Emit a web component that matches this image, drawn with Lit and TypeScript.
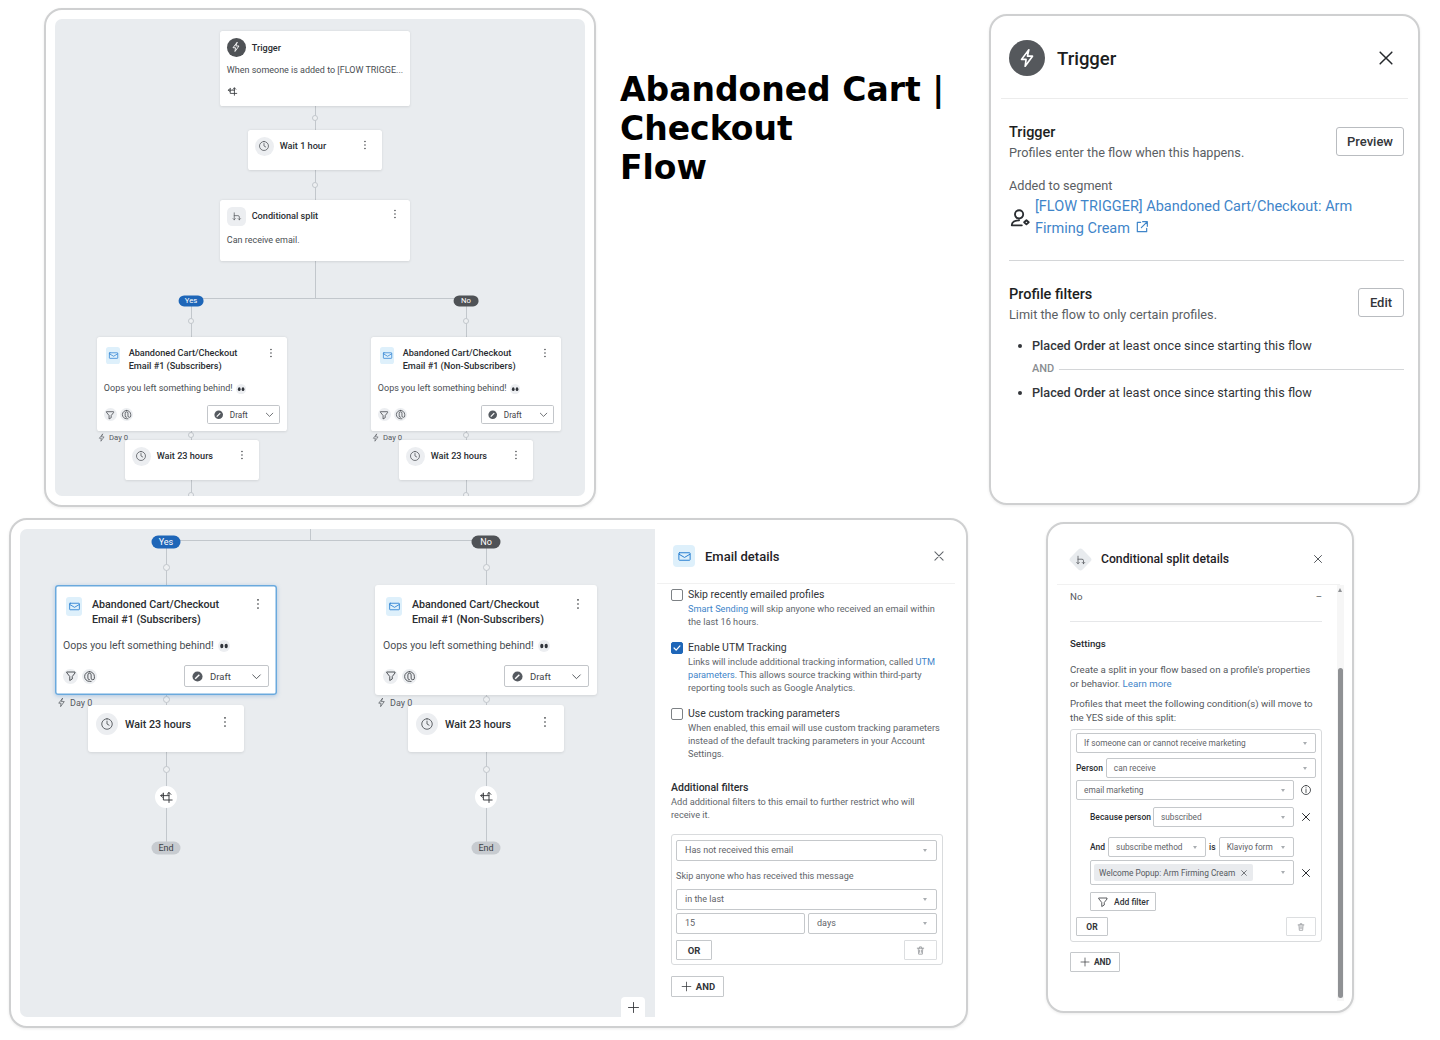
import { LitElement, html, css, nothing } from "lit";
import { customElement } from "lit/decorators.js";

const PATHS: Record<string, string> = {
  close: "M5 5l14 14M19 5L5 19",
  clock: "M12 3a9 9 0 1 0 0 18a9 9 0 1 0 0-18zM12 7v5l3.5 2",
  mail: "M4 6h16a1 1 0 0 1 1 1v10a1 1 0 0 1-1 1H4a1 1 0 0 1-1-1V7a1 1 0 0 1 1-1zM3.5 8.5l8.5 5 8.5-5",
  bolt: "M14 3L6 13.5h5L10 21l8-11h-5.5z",
  split: "M7 4v15M7 10h8a3 3 0 0 1 3 3v6M4.5 16.5L7 19l2.5-2.5M15.5 16.5L18 19l2.5-2.5",
  funnel: "M4 4h16v2l-5.5 7v5l-5 3v-8L4 6z",
  at: "M12 3a9 9 0 0 0 0 18h3M12 3a9 9 0 0 1 9 9v3a3 3 0 0 1-6 0V9a3 3 0 0 0-6 0v6a3 3 0 0 0 3 3",
  branch: "M16 20V4M13 7l3-3 3 3M3 9h13M6 6L3 9l3 3M7 5v11h14",
  trash: "M5 7h14M10 7V4h4v3M7 7l1 13h8l1-13M10 11v5M14 11v5",
  plus: "M12 4v16M4 12h16",
  info: "M12 3a9 9 0 1 0 0 18a9 9 0 1 0 0-18zM12 11v6M12 7.5v.5",
  ext: "M10 5H5v14h14v-5M13 4h7v7M20 4l-9 9",
  user: "M11 3.5a4.5 4.5 0 1 0 0 9a4.5 4.5 0 1 0 0-9zM3 20c0-3.5 3.5-5.5 8-5.5M3 20h11M19 14.5l2.5 2.2-2.5 2.2-2.5-2.2z",
  chev: "M5 9l7 7 7-7",
  check: "M5 12l5 5 9-10",
  kebab: "M12 5v.01M12 12v.01M12 19v.01",
};

const icon = (name: string, size: number, sw = 1.6) => html`<svg
  class="ic"
  width=${size}
  height=${size}
  viewBox="0 0 24 24"
  fill="none"
  stroke="currentColor"
  stroke-width=${sw}
  stroke-linecap="round"
  stroke-linejoin="round"
><path d=${PATHS[name]}></path></svg>`;

const eyes = html`<svg class="ic" width="12" height="12" viewBox="0 0 12 12">
  <circle cx="6" cy="6" r="6" fill="#eceef1"></circle>
  <ellipse cx="3.8" cy="6" rx="1.6" ry="2.2" fill="#30343a"></ellipse>
  <ellipse cx="8.2" cy="6" rx="1.6" ry="2.2" fill="#30343a"></ellipse>
</svg>`;

const draftDot = html`<svg class="ic" width="11" height="11" viewBox="0 0 12 12">
  <circle cx="6" cy="6" r="5.5" fill="#555a60"></circle>
  <path d="M3.5 8.5L8 4" stroke="#fff" stroke-width="1.6"></path>
</svg>`;

type Pt = [number, number];
type Diagram = {
  zoom: number;
  lines: [number, number, number, number][];
  dots: Pt[];
  pills: [number, number, string, string][];
  nodes: unknown[];
};

@customElement("app-root")
export class AppRoot extends LitElement {
  static styles = css`
    :host {
      display: block;
      position: relative;
      width: 1440px;
      height: 1040px;
      background: #fff;
      overflow: hidden;
      font-family: Roboto, "Noto Sans", sans-serif;
      color: #25282c;
    }
    .ic {
      display: block;
      flex: none;
    }
    .win {
      position: absolute;
      box-sizing: border-box;
      background: #fff;
      border: 2px solid #cfd0d1;
      border-radius: 18px;
      box-shadow: 0 1px 3px rgba(0, 0, 0, 0.08);
    }
    .win1 {
      left: 44px;
      top: 8px;
      width: 552px;
      height: 499px;
      padding: 9px;
      display: flex;
    }
    .win3 {
      left: 9px;
      top: 518px;
      width: 959px;
      height: 510px;
      padding: 9px;
      display: flex;
    }
    .canvas {
      position: relative;
      flex: 1;
      background: #e9ecef;
      border-radius: 7px;
      overflow: hidden;
    }
    .win3 .canvas {
      flex: none;
      width: 635px;
      border-radius: 7px 0 0 7px;
    }
    .stage {
      position: absolute;
      inset: 0;
    }
    .line {
      position: absolute;
      background: #c2c7cc;
    }
    .dot {
      position: absolute;
      width: 7px;
      height: 7px;
      box-sizing: border-box;
      margin: -3.5px 0 0 -3.5px;
      border-radius: 50%;
      background: #eef0f2;
      border: 1px solid #c2c7cc;
    }
    .pill {
      position: absolute;
      transform: translate(-50%, -50%);
      width: 29px;
      height: 13px;
      border-radius: 7px;
      font-size: 9px;
      line-height: 13px;
      text-align: center;
      color: #fff;
    }
    .yes {
      background: #1e66b8;
    }
    .no {
      background: #4f5256;
    }
    .end {
      background: #c7cbd0;
      color: #3c4045;
    }
    .node {
      position: absolute;
      box-sizing: border-box;
      display: flex;
      flex-direction: column;
      background: #fff;
      border-radius: 3px;
      box-shadow: 0 1px 3px rgba(0, 0, 0, 0.1);
      padding: 8px;
      width: 222px;
      font-size: 10.5px;
      color: #4a4e53;
    }
    .node.selected {
      box-shadow: inset 0 0 0 1.5px #6aa9dd, 0 1px 4px rgba(60, 130, 200, 0.35);
    }
    .head {
      display: flex;
      align-items: flex-start;
    }
    .nt {
      flex: 1;
      font-weight: 500;
      font-size: 10.7px;
      line-height: 15px;
      color: #2a2d31;
    }
    .kebab {
      margin-top: -1px;
      color: #2a2d31;
    }
    .email {
      height: 110px;
    }
    .email .head {
      padding: 4px 0 0 3px;
    }
    .email .nt {
      margin: 0 0 0 10px;
    }
    .email .kebab {
      margin: 0 4px 0 0;
    }
    .subject {
      display: flex;
      align-items: center;
      gap: 4px;
      margin-top: 11px;
      line-height: 15px;
    }
    .foot {
      display: flex;
      align-items: center;
      gap: 4px;
      margin-top: auto;
      color: #3f4348;
    }
    .draft {
      margin-left: auto;
      box-sizing: border-box;
      width: 85px;
      height: 22px;
      display: flex;
      align-items: center;
      gap: 7px;
      padding: 0 5px 0 7px;
      border: 1px solid #c3c6ca;
      border-radius: 2px;
      font-size: 9.5px;
      background: #fff;
    }
    .draft svg:last-child {
      margin-left: auto;
    }
    .tile {
      display: flex;
      align-items: center;
      justify-content: center;
      flex: none;
      width: 16px;
      height: 19px;
      border-radius: 3px;
      background: #def0fb;
      color: #2a80d2;
    }
    .wait {
      width: 156px;
      height: 47px;
    }
    .wait .nt {
      margin: 4px 0 0 7px;
    }
    .wait .kebab {
      margin: 2px 4px 0 0;
    }
    .round {
      display: flex;
      align-items: center;
      justify-content: center;
      flex: none;
      width: 22px;
      height: 22px;
      border-radius: 50%;
      background: #eceef1;
      color: #55595e;
    }
    .foot .round {
      width: 15px;
      height: 15px;
      color: #3f4348;
    }
    .trigger {
      height: 88px;
    }
    .cond {
      height: 71px;
    }
    .trigger .nt,
    .cond .nt {
      margin: 5px 0 0 7px;
    }
    .cond .nt {
      margin-top: 4px;
    }
    .cond .kebab {
      margin: 1px 3px 0 0;
    }
    .dark {
      background: #4f5256;
      color: #fff;
    }
    .line-text {
      margin-top: 8px;
      white-space: nowrap;
      line-height: 15px;
    }
    .cond .line-text {
      margin-top: 10px;
    }
    .mini-ic {
      margin-top: 11px;
      color: #33363a;
    }
    .day {
      position: absolute;
      display: flex;
      align-items: center;
      gap: 3px;
      font-size: 9px;
      color: #55595e;
    }
    .circle {
      position: absolute;
      display: flex;
      align-items: center;
      justify-content: center;
      transform: translate(-50%, -50%);
      width: 22px;
      height: 22px;
      border-radius: 50%;
      background: #fff;
      color: #33363a;
    }
    .zoom-btn {
      position: absolute;
      right: 10px;
      bottom: 0;
      width: 24px;
      height: 20px;
      display: flex;
      align-items: center;
      justify-content: center;
      background: #fff;
      border-radius: 4px 4px 0 0;
      color: #33363a;
    }
    .page-title {
      position: absolute;
      left: 620px;
      top: 70px;
      margin: 0;
      font-family: "DejaVu Sans", sans-serif;
      font-weight: 700;
      font-size: 33px;
      line-height: 39px;
      color: #000;
    }

    /* trigger panel */
    .win2 {
      left: 989px;
      top: 14px;
      width: 431px;
      height: 491px;
      padding: 24px 10px 0;
    }
    .w2-head {
      display: flex;
      align-items: center;
      padding: 0 12px 22px 8px;
      border-bottom: 1px solid #ececec;
    }
    .big-round {
      display: flex;
      align-items: center;
      justify-content: center;
      width: 36px;
      height: 36px;
      border-radius: 50%;
      background: #55585c;
      color: #fff;
    }
    .w2-title {
      flex: 1;
      margin: 2px 0 0 12px;
      font-size: 18.5px;
      font-weight: 500;
      color: #1c1e21;
    }
    .w2-body {
      padding: 0 4px 0 8px;
    }
    .sec {
      font-size: 12.7px;
      line-height: 20px;
      color: #5a5e63;
    }
    .sec-head {
      display: flex;
      justify-content: space-between;
      align-items: flex-start;
    }
    .sec-name {
      font-size: 14.5px;
      font-weight: 500;
      color: #1c1e21;
    }
    .btn {
      box-sizing: border-box;
      display: flex;
      align-items: center;
      justify-content: center;
      gap: 3px;
      border: 1px solid #b9bcc0;
      border-radius: 3px;
      background: #fff;
      font-weight: 700;
      color: #33363a;
    }
    .btn-lg {
      height: 29px;
      font-size: 13px;
      font-weight: 500;
      margin-top: 4px;
    }
    .first {
      margin-top: 24px;
      padding-bottom: 20px;
      border-bottom: 1px solid #d4d6d8;
    }
    .added {
      margin-top: 13px;
    }
    .seg {
      display: flex;
      align-items: center;
      gap: 4px;
      font-size: 14.5px;
      line-height: 22px;
      white-space: nowrap;
    }
    .seg > .ic {
      color: #2a2d31;
    }
    a {
      color: #3f85c9;
      text-decoration: none;
    }
    .seg .ext {
      display: inline-block;
      vertical-align: -2px;
    }
    .second {
      margin-top: 24px;
    }
    .filter {
      display: flex;
      align-items: center;
      margin-top: 11px;
      padding-left: 9px;
      color: #33363a;
    }
    .filter::before {
      content: "";
      width: 4px;
      height: 4px;
      margin-right: 10px;
      border-radius: 50%;
      background: #33363a;
    }
    .filter b {
      font-weight: 500;
    }
    .and-row {
      display: flex;
      align-items: center;
      gap: 5px;
      margin: 3px 0 -7px 23px;
      font-size: 11px;
      font-weight: 500;
      color: #8a8d91;
    }
    .and-row::after {
      content: "";
      flex: 1;
      height: 1px;
      background: #d4d6d8;
    }

    /* email details panel */
    .panel {
      flex: 1;
      min-width: 0;
      display: flex;
      flex-direction: column;
      font-size: 9.2px;
      line-height: 13px;
      color: #62666b;
    }
    .panel-head {
      flex: none;
      display: flex;
      align-items: center;
      height: 55px;
      padding: 0 9px 0 18px;
      margin: 0 2px;
      box-sizing: border-box;
      border-bottom: 1px solid #f1f1f1;
    }
    .panel-name {
      flex: 1;
      margin-left: 10px;
      font-size: 13px;
      font-weight: 500;
      color: #1f2226;
    }
    .panel-head .tile {
      width: 22px;
      height: 22px;
      margin-left: -2px;
      border-radius: 4px;
    }
    .panel-body {
      padding: 4px 14px 0 16px;
    }
    .opt {
      display: flex;
      gap: 5px;
      margin-bottom: 13px;
      white-space: nowrap;
    }
    .box {
      box-sizing: border-box;
      flex: none;
      width: 12px;
      height: 12px;
      margin-top: 1px;
      border: 1px solid #7d8185;
      border-radius: 2px;
      background: #fff;
    }
    .box.on {
      display: flex;
      align-items: center;
      justify-content: center;
      border-color: #1e66b8;
      background: #1e66b8;
      color: #fff;
    }
    .opt-t {
      font-size: 10.5px;
      line-height: 14px;
      color: #33363a;
    }
    .sub-t {
      font-size: 10.5px;
      line-height: 14px;
      font-weight: 500;
      color: #2a2d31;
    }
    .adds {
      margin-top: 21px;
    }
    .group {
      box-sizing: border-box;
      margin-top: 13px;
      width: 272px;
      height: 131px;
      padding: 5px 5px 5px 4px;
      border: 1px solid #d9dbdd;
      border-radius: 3px;
    }
    .sel {
      box-sizing: border-box;
      display: flex;
      align-items: center;
      height: 21px;
      padding: 0 9px 0 8px;
      border: 1px solid #c5c8cb;
      border-radius: 2px;
      background: #fff;
      font-size: 9px;
      color: #5f6368;
      white-space: nowrap;
    }
    .sel.caret::after {
      content: "";
      margin-left: auto;
      border: 2.5px solid transparent;
      border-top: 3px solid #a9adb1;
      border-bottom: 0;
    }
    .group .note {
      margin: 9px 0 6px;
      font-size: 9.1px;
    }
    .two {
      display: flex;
      gap: 3px;
      margin-top: 3px;
    }
    .two .sel {
      flex: 1;
    }
    .acts {
      display: flex;
      justify-content: space-between;
      margin-top: 6px;
    }
    .btn-sm {
      height: 20px;
      width: 36px;
      font-size: 9.5px;
      border-radius: 1px;
      border-color: #c5c8cb;
    }
    .btn-trash {
      width: 33px;
      color: #8a8d91;
      border-color: #dcdee0;
    }
    .btn-and {
      margin-top: 11px;
      width: 53px;
      height: 21px;
      font-size: 9.5px;
      border-radius: 1px;
      border-color: #c5c8cb;
    }

    /* conditional split panel */
    .win4 {
      left: 1046px;
      top: 522px;
      width: 308px;
      height: 491px;
      font-size: 9.7px;
      line-height: 14px;
      color: #55595e;
    }
    .w4-head {
      display: flex;
      align-items: center;
      height: 61px;
      margin: 0 12px 0 9px;
      box-sizing: border-box;
      padding: 10px 16px 0 12px;
      border-bottom: 1px solid #f1f1f1;
    }
    .diamond {
      display: flex;
      align-items: center;
      justify-content: center;
      width: 17px;
      height: 17px;
      margin: 0 3px;
      transform: rotate(45deg);
      border-radius: 3px;
      background: #e8ebee;
    }
    .diamond .ic {
      transform: rotate(-45deg);
    }
    .w4-name {
      flex: 1;
      margin-left: 9px;
      font-size: 12.2px;
      font-weight: 500;
      color: #1f2226;
    }
    .w4-body {
      padding: 5px 30px 0 22px;
    }
    .no-row {
      display: flex;
      justify-content: space-between;
      height: 31px;
      border-bottom: 1px solid #e6e7e9;
    }
    .set {
      margin-top: 15px;
      font-weight: 500;
      color: #2a2d31;
    }
    .para {
      margin-top: 12px;
      white-space: nowrap;
    }
    .para.close {
      margin-top: 6px;
    }
    .fbox {
      box-sizing: border-box;
      margin-top: 4px;
      height: 213px;
      padding: 3px 5px;
      border: 1px solid #d9dbdd;
      border-radius: 3px;
    }
    .fbox .sel {
      height: 20px;
      font-size: 8.3px;
      padding: 0 8px 0 7px;
    }
    .row {
      display: flex;
      align-items: center;
      margin-top: 2px;
      font-size: 8.5px;
      font-weight: 500;
      color: #2a2d31;
      gap: 3px;
    }
    .row .sel {
      font-weight: 400;
    }
    .x {
      flex: none;
      width: 19px;
      display: flex;
      justify-content: flex-end;
      margin-left: auto;
      color: #2a2d31;
    }
    .x .ic {
      margin-right: 4px;
    }
    .ind {
      margin-left: 14px;
    }
    .chip {
      display: flex;
      align-items: center;
      gap: 5px;
      height: 17px;
      margin-left: -4px;
      padding: 0 5px;
      border-radius: 2px;
      background: #e9ebee;
      color: #55595e;
    }
    .btn-filter {
      width: 66px;
      height: 19px;
      gap: 5px;
      font-size: 8.5px;
      font-weight: 500;
      border-color: #c5c8cb;
      border-radius: 1px;
      margin: 7px 0 0 14px;
    }
    .fbox .acts {
      margin-top: 6px;
    }
    .fbox .btn-sm {
      height: 19px;
      width: 32px;
      font-size: 8.5px;
    }
    .fbox .btn-trash {
      width: 30px;
    }
    .w4-body .btn-and {
      margin-top: 10px;
      width: 50px;
      height: 20px;
      font-size: 8.5px;
    }
    .track {
      position: absolute;
      left: 289px;
      top: 61px;
      width: 7px;
      height: 416px;
      background: #f6f6f6;
    }
    .thumb {
      position: absolute;
      left: 1px;
      top: 83px;
      width: 5px;
      height: 330px;
      border-radius: 3px;
      background: #8f9194;
    }
    .up {
      position: absolute;
      left: 1px;
      top: 3px;
      border: 2.5px solid transparent;
      border-bottom: 4px solid #8f9194;
      border-top: 0;
    }
  `;

  // x and y are in shown pixels, the stage zoom is divided back out
  private place(z: number, x: number, y: number) {
    return `left:${x / z}px;top:${y / z}px`;
  }

  private head(ic: unknown, title: unknown, kebab = true) {
    return html`<div class="head">
      ${ic}
      <div class="nt">${title}</div>
      ${kebab ? html`<div class="kebab">${icon("kebab", 14, 2.8)}</div>` : nothing}
    </div>`;
  }

  private emailNode(z: number, x: number, y: number, who: string, selected = false) {
    return html`<div
      class="node email ${selected ? "selected" : ""}"
      style=${this.place(z, x, y)}
    >
      ${this.head(
        html`<div class="tile">${icon("mail", 13)}</div>`,
        html`Abandoned Cart/Checkout<br />Email #1 (${who})`
      )}
      <div class="subject">Oops you left something behind! ${eyes}</div>
      <div class="foot">
        <span class="round">${icon("funnel", 12, 1.8)}</span>
        <span class="round">${icon("at", 13, 1.6)}</span>
        <div class="draft">${draftDot} Draft ${icon("chev", 13)}</div>
      </div>
    </div>`;
  }

  private waitNode(z: number, x: number, y: number, label: string) {
    return html`<div class="node wait" style=${this.place(z, x, y)}>
      ${this.head(html`<div class="round">${icon("clock", 14)}</div>`, label)}
    </div>`;
  }

  private dayTag(z: number, x: number, y: number) {
    return html`<div class="day" style=${this.place(z, x, y)}>
      ${icon("bolt", 11)} Day 0
    </div>`;
  }

  private stage(d: Diagram) {
    const z = d.zoom;
    return html`<div class="stage" style="zoom:${z}">
      ${d.lines.map(([x1, y1, x2, y2]) => {
        const w = Math.max(x2 - x1, 1) / z;
        const h = Math.max(y2 - y1, 1) / z;
        return html`<div
          class="line"
          style="${this.place(z, x1, y1)};width:${w}px;height:${h}px"
        ></div>`;
      })}
      ${d.dots.map(([x, y]) => html`<div class="dot" style=${this.place(z, x, y)}></div>`)}
      ${d.pills.map(
        ([x, y, t, c]) =>
          html`<div class="pill ${c}" style=${this.place(z, x, y)}>${t}</div>`
      )}
      ${d.nodes}
    </div>`;
  }

  render() {
    const a = 0.856;
    const small: Diagram = {
      zoom: a,
      lines: [
        [260, 87, 260, 279],
        [136, 279, 411, 279],
        [136, 279, 136, 477],
        [411, 279, 411, 477],
      ],
      dots: [[260, 99], [260, 166], [136, 302], [411, 302], [136, 416], [411, 416], [136, 476], [411, 476]],
      pills: [[136, 282, "Yes", "yes"], [411, 282, "No", "no"]],
      nodes: [
        html`<div class="node trigger" style=${this.place(a, 165, 12)}>
          ${this.head(
            html`<div class="round dark">${icon("bolt", 14, 1.8)}</div>`,
            "Trigger",
            false
          )}
          <div class="line-text">When someone is added to [FLOW TRIGGE...</div>
          <div class="mini-ic">${icon("branch", 13, 1.8)}</div>
        </div>`,
        this.waitNode(a, 193, 111, "Wait 1 hour"),
        html`<div class="node cond" style=${this.place(a, 165, 181)}>
          ${this.head(
            html`<div class="round" style="border-radius:6px">${icon("split", 13)}</div>`,
            "Conditional split"
          )}
          <div class="line-text">Can receive email.</div>
        </div>`,
        this.emailNode(a, 42, 318, "Subscribers"),
        this.emailNode(a, 316, 318, "Non-Subscribers"),
        this.waitNode(a, 70, 421, "Wait 23 hours"),
        this.waitNode(a, 344, 421, "Wait 23 hours"),
        this.dayTag(a, 42, 414),
        this.dayTag(a, 316, 414),
      ],
    };
    const large: Diagram = {
      zoom: 1,
      lines: [
        [290, 0, 290, 11],
        [146, 11, 466, 11],
        [146, 11, 146, 315],
        [466, 11, 466, 315],
      ],
      dots: [[146, 38], [466, 38], [146, 170], [466, 170], [146, 240], [466, 240]],
      pills: [[146, 13, "Yes", "yes"], [466, 13, "No", "no"], [146, 319, "End", "end"], [466, 319, "End", "end"]],
      nodes: [
        this.emailNode(1, 35, 56, "Subscribers", true),
        this.emailNode(1, 355, 56, "Non-Subscribers"),
        this.waitNode(1, 68, 176, "Wait 23 hours"),
        this.waitNode(1, 388, 176, "Wait 23 hours"),
        this.dayTag(1, 36, 168),
        this.dayTag(1, 356, 168),
        html`<div class="circle" style="left:146px;top:268px">${icon("branch", 15, 1.5)}</div>`,
        html`<div class="circle" style="left:466px;top:268px">${icon("branch", 15, 1.5)}</div>`,
      ],
    };

    return html`
      <section class="win win1">
        <div class="canvas">${this.stage(small)}</div>
      </section>

      <h1 class="page-title">Abandoned Cart |<br />Checkout<br />Flow</h1>

      <section class="win win2">
        <div class="w2-head">
          <div class="big-round">${icon("bolt", 22, 1.8)}</div>
          <div class="w2-title">Trigger</div>
          ${icon("close", 20, 1.8)}
        </div>
        <div class="w2-body">
          <div class="sec first">
            <div class="sec-head">
              <div>
                <div class="sec-name">Trigger</div>
                <div>Profiles enter the flow when this happens.</div>
              </div>
              <div class="btn btn-lg" style="width:68px">Preview</div>
            </div>
            <div class="added">Added to segment</div>
            <div class="seg">
              ${icon("user", 22, 2)}
              <a
                >[FLOW TRIGGER] Abandoned Cart/Checkout: Arm<br />Firming Cream
                <span class="ext">${icon("ext", 16, 1.8)}</span></a
              >
            </div>
          </div>
          <div class="sec second">
            <div class="sec-head">
              <div>
                <div class="sec-name">Profile filters</div>
                <div>Limit the flow to only certain profiles.</div>
              </div>
              <div class="btn btn-lg" style="width:46px;margin-top:3px">Edit</div>
            </div>
            <div class="filter">
              <span><b>Placed Order</b> at least once since starting this flow</span>
            </div>
            <div class="and-row">AND</div>
            <div class="filter">
              <span><b>Placed Order</b> at least once since starting this flow</span>
            </div>
          </div>
        </div>
      </section>

      <section class="win win3">
        <div class="canvas">
          ${this.stage(large)}
          <div class="zoom-btn">${icon("plus", 15, 1.4)}</div>
        </div>
        <div class="panel">
          <div class="panel-head">
            <div class="tile">${icon("mail", 15)}</div>
            <div class="panel-name">Email details</div>
            ${icon("close", 14, 1.8)}
          </div>
          <div class="panel-body">
            <div class="opt">
              <div class="box"></div>
              <div>
                <div class="opt-t">Skip recently emailed profiles</div>
                <div>
                  <a>Smart Sending</a> will skip anyone who received an email within<br />the
                  last 16 hours.
                </div>
              </div>
            </div>
            <div class="opt">
              <div class="box on">${icon("check", 10, 3)}</div>
              <div>
                <div class="opt-t">Enable UTM Tracking</div>
                <div>
                  Links will include additional tracking information, called <a>UTM</a><br /><a
                    >parameters</a
                  >. This allows source tracking within third-party<br />reporting tools such as
                  Google Analytics.
                </div>
              </div>
            </div>
            <div class="opt">
              <div class="box"></div>
              <div>
                <div class="opt-t">Use custom tracking parameters</div>
                <div>
                  When enabled, this email will use custom tracking parameters<br />instead of the
                  default tracking parameters in your Account<br />Settings.
                </div>
              </div>
            </div>
            <div class="sub-t adds">Additional filters</div>
            <div>
              Add additional filters to this email to further restrict who will<br />receive it.
            </div>
            <div class="group">
              <div class="sel caret">Has not received this email</div>
              <div class="note">Skip anyone who has received this message</div>
              <div class="sel caret">in the last</div>
              <div class="two">
                <div class="sel">15</div>
                <div class="sel caret">days</div>
              </div>
              <div class="acts">
                <div class="btn btn-sm">OR</div>
                <div class="btn btn-sm btn-trash">${icon("trash", 11)}</div>
              </div>
            </div>
            <div class="btn btn-and">${icon("plus", 13, 1.4)}AND</div>
          </div>
        </div>
      </section>

      <section class="win win4">
        <div class="w4-head">
          <div class="diamond">${icon("split", 12)}</div>
          <div class="w4-name">Conditional split details</div>
          ${icon("close", 12, 2)}
        </div>
        <div class="w4-body">
          <div class="no-row"><span>No</span><span>–</span></div>
          <div class="set">Settings</div>
          <div class="para">
            Create a split in your flow based on a profile's properties<br />or behavior.
            <a>Learn more</a>
          </div>
          <div class="para close">
            Profiles that meet the following condition(s) will move to<br />the YES side of this
            split:
          </div>
          <div class="fbox">
            <div class="sel caret">If someone can or cannot receive marketing</div>
            <div class="row" style="margin-top:5px">
              Person
              <div class="sel caret" style="flex:1">can receive</div>
            </div>
            <div class="row">
              <div class="sel caret" style="flex:1">email marketing</div>
              <div class="x">${icon("info", 12)}</div>
            </div>
            <div class="row ind" style="margin-top:7px;gap:2px">
              Because person
              <div class="sel caret" style="flex:1">subscribed</div>
              <div class="x" style="width:20px">${icon("close", 12, 2)}</div>
            </div>
            <div class="row ind" style="margin-top:10px;margin-right:22px">
              And
              <div class="sel caret" style="flex:none;width:98px">subscribe method</div>
              is
              <div class="sel caret" style="flex:1">Klaviyo form</div>
            </div>
            <div class="row ind" style="margin-top:3px">
              <div class="sel caret" style="flex:1;height:25px">
                <span class="chip">Welcome Popup: Arm Firming Cream ${icon("close", 8, 2.4)}</span>
              </div>
              <div class="x">${icon("close", 12, 2)}</div>
            </div>
            <div class="btn btn-filter">${icon("funnel", 12)}Add filter</div>
            <div class="acts">
              <div class="btn btn-sm">OR</div>
              <div class="btn btn-sm btn-trash">${icon("trash", 10)}</div>
            </div>
          </div>
          <div class="btn btn-and">${icon("plus", 12, 1.4)}AND</div>
        </div>
        <div class="track">
          <div class="up"></div>
          <div class="thumb"></div>
        </div>
      </section>
    `;
  }
}
